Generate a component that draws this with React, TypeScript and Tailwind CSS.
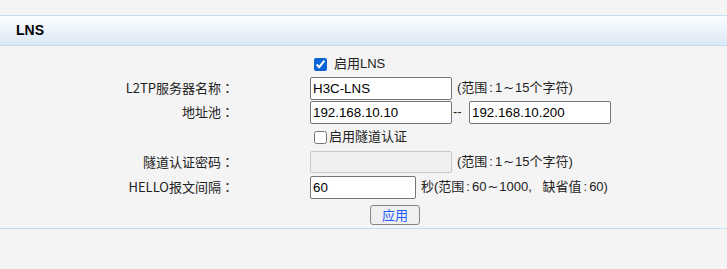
import { useState } from "react";

const FONT = "font-['Liberation_Sans','Noto_Sans_CJK_SC',sans-serif]";
const INPUT = "h-[23px] border border-[#767676] rounded-[2px] bg-white px-[2px] text-[13.333px] text-black outline-none font-['Liberation_Sans',sans-serif]";

function Label({ text }: { text: string }) {
  return (
    <div className="w-[234px] shrink-0 text-right font-['Noto_Sans_CJK_SC',sans-serif]">
      {text}
      <span className="font-['Noto_Sans_CJK_JP',sans-serif]">：</span>
    </div>
  );
}

const Colon = () => <span className="mx-[2px]">:</span>;
const Tilde = () => <span className="mx-[1px] font-['DejaVu_Sans',sans-serif]">~</span>;

export default function App() {
  const [lns, setLns] = useState(true);
  const [tunnel, setTunnel] = useState(false);

  return (
    <div className={`w-[727px] h-[269px] bg-[#f4f4f4] pt-[15px] text-[13px] text-[#222] ${FONT}`}>
      <div className="h-[31px] border-y border-[#c8ddf2] bg-gradient-to-b from-[#fbfdff] to-[#dce8f6] flex items-center pl-[16px] font-bold text-[14px] text-black">
        LNS
      </div>

      <div className="flex items-center h-[24px] mt-[6px]">
        <div className="w-[310px] shrink-0" />
        <label className="flex items-center">
          <input type="checkbox" checked={lns} onChange={e => setLns(e.target.checked)} className="w-[13px] h-[13px] ml-[4px] mr-[7px] accent-[#0b63d8]" />
          <span>启用LNS</span>
        </label>
      </div>

      <div className="flex items-center h-[24px]">
        <Label text="L2TP服务器名称" />
        <div className="w-[76px] shrink-0" />
        <input defaultValue="H3C-LNS" className={`w-[142px] ${INPUT}`} />
        <span className="ml-[5px]">(范围<Colon />1<Tilde />15个字符)</span>
      </div>

      <div className="flex items-center h-[24px]">
        <Label text="地址池" />
        <div className="w-[76px] shrink-0" />
        <input defaultValue="192.168.10.10" className={`w-[142px] ${INPUT}`} />
        <span className="w-[17px] pl-[1px]">--</span>
        <input defaultValue="192.168.10.200" className={`w-[142px] ${INPUT}`} />
      </div>

      <div className="flex items-center h-[26px]">
        <div className="w-[310px] shrink-0" />
        <label className="flex items-center">
          <input type="checkbox" checked={tunnel} onChange={e => setTunnel(e.target.checked)} className="w-[13px] h-[13px] ml-[4px] mr-[2px]" />
          <span>启用隧道认证</span>
        </label>
      </div>

      <div className="flex items-center h-[24px]">
        <Label text="隧道认证密码" />
        <div className="w-[76px] shrink-0" />
        <input type="password" disabled={!tunnel} className="w-[142px] h-[22px] border border-[#c8c8c8] rounded-[2px] bg-[#f0f0f0] px-[2px] text-[13.333px] outline-none" />
        <span className="ml-[5px]">(范围<Colon />1<Tilde />15个字符)</span>
      </div>

      <div className="flex items-center h-[24px] mt-[1px]">
        <Label text="HELLO报文间隔" />
        <div className="w-[76px] shrink-0" />
        <input defaultValue="60" className={`w-[106px] ${INPUT}`} />
        <span className="ml-[5px]">
          秒(范围<Colon />60<Tilde />1000<span className="mr-[7px]">,</span> 缺省值<Colon />60)
        </span>
      </div>

      <div className="flex items-center h-[20px] mt-[6px]">
        <div className="w-[370px] shrink-0" />
        <button className="w-[50px] h-[20px] border border-[#858585] rounded-[3px] bg-[#efefef] text-[13px] text-[#1f5cff] leading-none">
          应用
        </button>
      </div>

      <div className="mt-[3px] border-b border-[#c8ddf2]" />
    </div>
  );
}
